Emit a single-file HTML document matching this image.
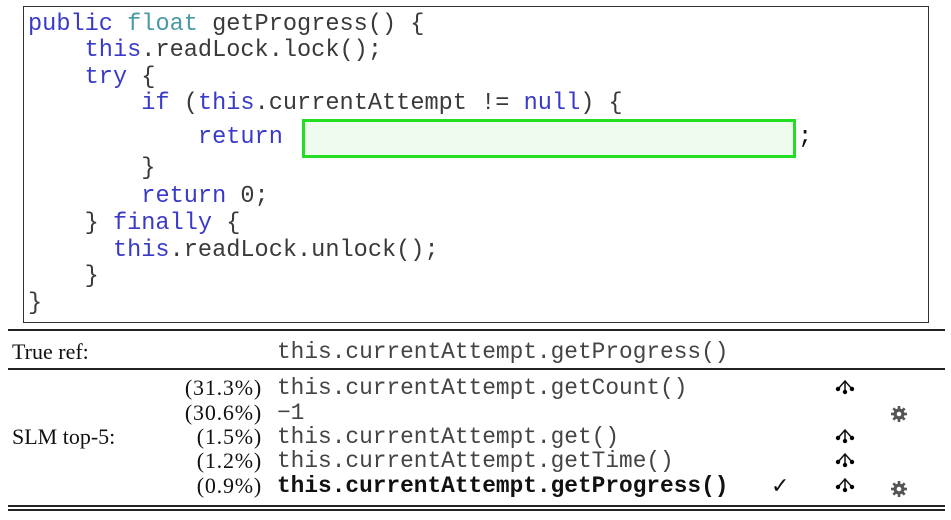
<!DOCTYPE html>
<html><head><meta charset="utf-8"><style>
body{margin:0;width:951px;height:520px;background:#fff;position:relative;overflow:hidden}
.box{position:absolute;left:23px;top:6px;width:906px;height:317px;border:1.5px solid #333;box-sizing:border-box}
.c{position:absolute;font-family:"Liberation Mono",monospace;font-size:23.6px;color:#3a3a3a;white-space:pre;line-height:27px}
.k{color:#3a3ac8}.t{color:#4a9aa6}
.g{position:absolute;left:302px;top:119px;width:494px;height:39px;border:3px solid #22dd22;background:#f0fbf0;box-sizing:border-box}
.r{position:absolute;left:0;height:2px;background:#222}
.s{position:absolute;font-family:"Liberation Serif",serif;font-size:22px;color:#111;line-height:24px;white-space:pre}
.m{position:absolute;font-family:"Liberation Mono",monospace;font-size:22.8px;color:#444;line-height:24px;white-space:pre}
.p{position:absolute;font-family:"Liberation Serif",serif;font-size:22px;letter-spacing:0.8px;color:#111;line-height:24px;right:689px;text-align:right}
</style></head><body>
<div class="box"></div>
<div class="g"></div>
<div class="c" style="left:28px;top:11px"><span class="k">public</span> <span class="t">float</span> getProgress() {</div>
<div class="c" style="left:28px;top:37px">    <span class="k">this</span>.readLock.lock();</div>
<div class="c" style="left:28px;top:64px">    <span class="k">try</span> {</div>
<div class="c" style="left:28px;top:90px">        <span class="k">if</span> (<span class="k">this</span>.currentAttempt != <span class="k">null</span>) {</div>
<div class="c" style="left:28px;top:124px">            <span class="k">return</span></div>
<div class="c" style="left:798px;top:124px;color:#111">;</div>
<div class="c" style="left:28px;top:155px">        }</div>
<div class="c" style="left:28px;top:183px">        <span class="k">return</span> 0;</div>
<div class="c" style="left:28px;top:210px">    } <span class="k">finally</span> {</div>
<div class="c" style="left:28px;top:237px">      <span class="k">this</span>.readLock.unlock();</div>
<div class="c" style="left:28px;top:263px">    }</div>
<div class="c" style="left:28px;top:290px">}</div>

<div class="r" style="left:8px;width:937px;top:329px"></div>
<div class="s" style="left:12px;top:340px">True ref:</div>
<div class="m" style="left:277px;top:340px">this.currentAttempt.getProgress()</div>
<div class="r" style="left:8px;width:937px;top:368px;height:1.5px"></div>

<div class="p" style="top:376px">(31.3%)</div>
<div class="p" style="top:401px">(30.6%)</div>
<div class="p" style="top:425px">(1.5%)</div>
<div class="p" style="top:449px">(1.2%)</div>
<div class="p" style="top:474px">(0.9%)</div>
<div class="s" style="left:12px;top:425px">SLM top-5:</div>
<div class="m" style="left:277px;top:376px">this.currentAttempt.getCount()</div>
<div class="m" style="left:277px;top:401px">−1</div>
<div class="m" style="left:277px;top:425px">this.currentAttempt.get()</div>
<div class="m" style="left:277px;top:449px">this.currentAttempt.getTime()</div>
<div class="m" style="left:277px;top:474px;font-weight:bold;color:#111">this.currentAttempt.getProgress()</div>
<div class="s" style="left:771px;top:474px">✓</div>

<svg width="951" height="520" style="position:absolute;left:0;top:0">
<defs>
<g id="tr"><path d="M-7,2 L0,-6 L7,2 M0,-6 L0,5" stroke="#111" stroke-width="1.5" fill="none"/><circle cx="-7" cy="2" r="2.2"/><circle cx="7" cy="2" r="2.2"/><circle cx="0" cy="5" r="2.2"/></g>
<g id="gr"><circle r="5.5" fill="#555"/><g stroke="#555" stroke-width="2.6"><line x1="0" y1="-8" x2="0" y2="8"/><line x1="-8" y1="0" x2="8" y2="0"/><line x1="-5.7" y1="-5.7" x2="5.7" y2="5.7"/><line x1="-5.7" y1="5.7" x2="5.7" y2="-5.7"/></g><circle r="2.3" fill="#fff"/></g>
</defs>
<use href="#tr" x="845" y="387"/>
<use href="#tr" x="845" y="436"/>
<use href="#tr" x="845" y="460"/>
<use href="#tr" x="845" y="485"/>
<use href="#gr" x="899" y="414"/>
<use href="#gr" x="899" y="489"/>
</svg>
<div class="r" style="left:8px;width:937px;top:505px;height:1.5px"></div>
<div class="r" style="left:8px;width:937px;top:509px;height:1.5px"></div>
</body></html>
